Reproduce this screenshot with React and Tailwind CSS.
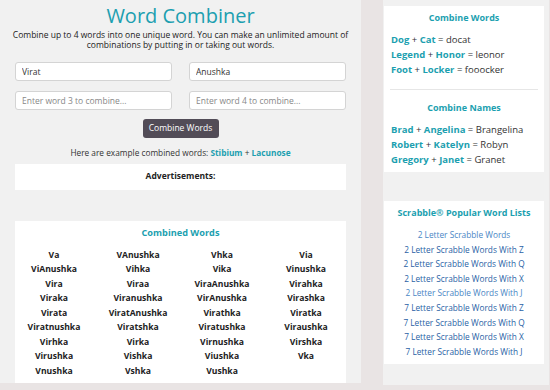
import React from 'react';

const teal = 'text-[#1c9fb0]';

const words = [
  'Va', 'VAnushka', 'Vhka', 'Via',
  'ViAnushka', 'Vihka', 'Vika', 'Vinushka',
  'Vira', 'Viraa', 'ViraAnushka', 'Virahka',
  'Viraka', 'Viranushka', 'VirAnushka', 'Virashka',
  'Virata', 'ViratAnushka', 'Virathka', 'Viratka',
  'Viratnushka', 'Viratshka', 'Viratushka', 'Viraushka',
  'Virhka', 'Virka', 'Virnushka', 'Virshka',
  'Virushka', 'Vishka', 'Viushka', 'Vka',
  'Vnushka', 'Vshka', 'Vushka',
];

const wordExamples = [
  ['Dog', 'Cat', 'docat'],
  ['Legend', 'Honor', 'leonor'],
  ['Foot', 'Locker', 'fooocker'],
];

const nameExamples = [
  ['Brad', 'Angelina', 'Brangelina'],
  ['Robert', 'Katelyn', 'Robyn'],
  ['Gregory', 'Janet', 'Granet'],
];

const scrabble = [
  ['2 Letter Scrabble Words', true],
  ['2 Letter Scrabble Words With Z', false],
  ['2 Letter Scrabble Words With Q', false],
  ['2 Letter Scrabble Words With X', false],
  ['2 Letter Scrabble Words With J', true],
  ['7 Letter Scrabble Words With Z', false],
  ['7 Letter Scrabble Words With Q', false],
  ['7 Letter Scrabble Words With X', false],
  ['7 Letter Scrabble Words With J', false],
];

const ExampleList = ({ title, rows }) => (
  <div>
    <h3 className={`text-center text-[9px] leading-[12px] font-bold ${teal} mb-[9px]`}>{title}</h3>
    <div className="flex flex-col gap-[1px]">
      {rows.map(([a, b, r]) => (
        <div key={a} className="text-[9.5px] leading-[14px] text-[#333]">
          <span className={`font-bold ${teal}`}>{a}</span> + <span className={`font-bold ${teal}`}>{b}</span> = {r}
        </div>
      ))}
    </div>
  </div>
);

const Input = ({ value, placeholder }) => (
  <input
    defaultValue={value}
    placeholder={placeholder}
    className="h-[19px] w-full bg-white border border-[#d4d4d4] rounded-[3px] px-[6px] text-[8.5px] text-[#333] placeholder:text-[#888] outline-none"
  />
);

export default function App() {
  return (
    <div
      className="w-[550px] h-[390px] bg-[#e9e4e4] flex overflow-hidden"
      style={{ fontFamily: '"Open Sans", "Liberation Sans", sans-serif' }}
    >
      {/* Main column */}
      <div className="w-[361px] h-[383px] bg-[#f1f1f1] px-[15px] flex flex-col">
        <h1 className={`text-center text-[20px] leading-[28px] mt-[2px] ${teal}`}>Word Combiner</h1>
        <p className="text-center text-[8.5px] leading-[10px] text-[#222] mx-[-12px] whitespace-nowrap">
          Combine up to 4 words into one unique word. You can make an unlimited amount of<br />
          combinations by putting in or taking out words.
        </p>

        <div className="grid grid-cols-2 gap-x-[17px] gap-y-[10px] mt-[12px]">
          <Input value="Virat" />
          <Input value="Anushka" />
          <Input placeholder="Enter word 3 to combine..." />
          <Input placeholder="Enter word 4 to combine..." />
        </div>

        <div className="flex justify-center mt-[9px]">
          <button className="h-[19px] w-[76px] bg-[#524c57] text-white text-[8.5px] rounded-[3px]">Combine Words</button>
        </div>

        <p className="text-center text-[8.3px] text-[#333] mt-[9px] leading-[12px]">
          Here are example combined words: <span className={`font-bold ${teal}`}>Stibium</span> + <span className={`font-bold ${teal}`}>Lacunose</span>
        </p>

        <div className="bg-white h-[26px] mt-[5px] pt-[6px] text-center text-[8.5px] leading-[12px] font-bold text-[#222]">Advertisements:</div>

        <div className="bg-white mt-[31px] h-[164px] pt-[6px]">
          <h2 className={`text-center text-[9.2px] leading-[12px] font-bold ${teal}`}>Combined Words</h2>
          <div className="grid grid-cols-[repeat(4,84px)] ml-[-3px] mt-[9px]">
            {words.map((w) => (
              <div key={w} className="text-center text-[8.6px] font-bold leading-[14.5px] text-[#222]">{w}</div>
            ))}
          </div>
        </div>
      </div>

      {/* Right sidebar */}
      <div className="ml-[22px] w-[166px] h-[385px] bg-[#f1f1f1] pt-[6px] flex flex-col">
        <div className="bg-white w-[160px] ml-[1px] h-[166px] px-[7px] pt-[6px]">
          <ExampleList title="Combine Words" rows={wordExamples} />
          <div className="h-px bg-[#e6e6e6] mx-[-1px] mt-[12px] mb-[12px]" />
          <ExampleList title="Combine Names" rows={nameExamples} />
        </div>

        <div className="bg-white w-[160px] ml-[1px] h-[163px] mt-[29px] pt-[6px]">
          <h3 className={`text-center text-[9px] leading-[12px] font-bold ${teal}`}>Scrabble® Popular Word Lists</h3>
          <div className="flex flex-col items-center mt-[9px]">
            {scrabble.map(([t, light]) => (
              <a
                key={t}
                href="#"
                className={`text-[8.3px] leading-[14.6px] ${light ? 'text-[#4a86c5]' : 'text-[#2a5fa5]'}`}
              >
                {t}
              </a>
            ))}
          </div>
        </div>
      </div>
    </div>
  );
}
